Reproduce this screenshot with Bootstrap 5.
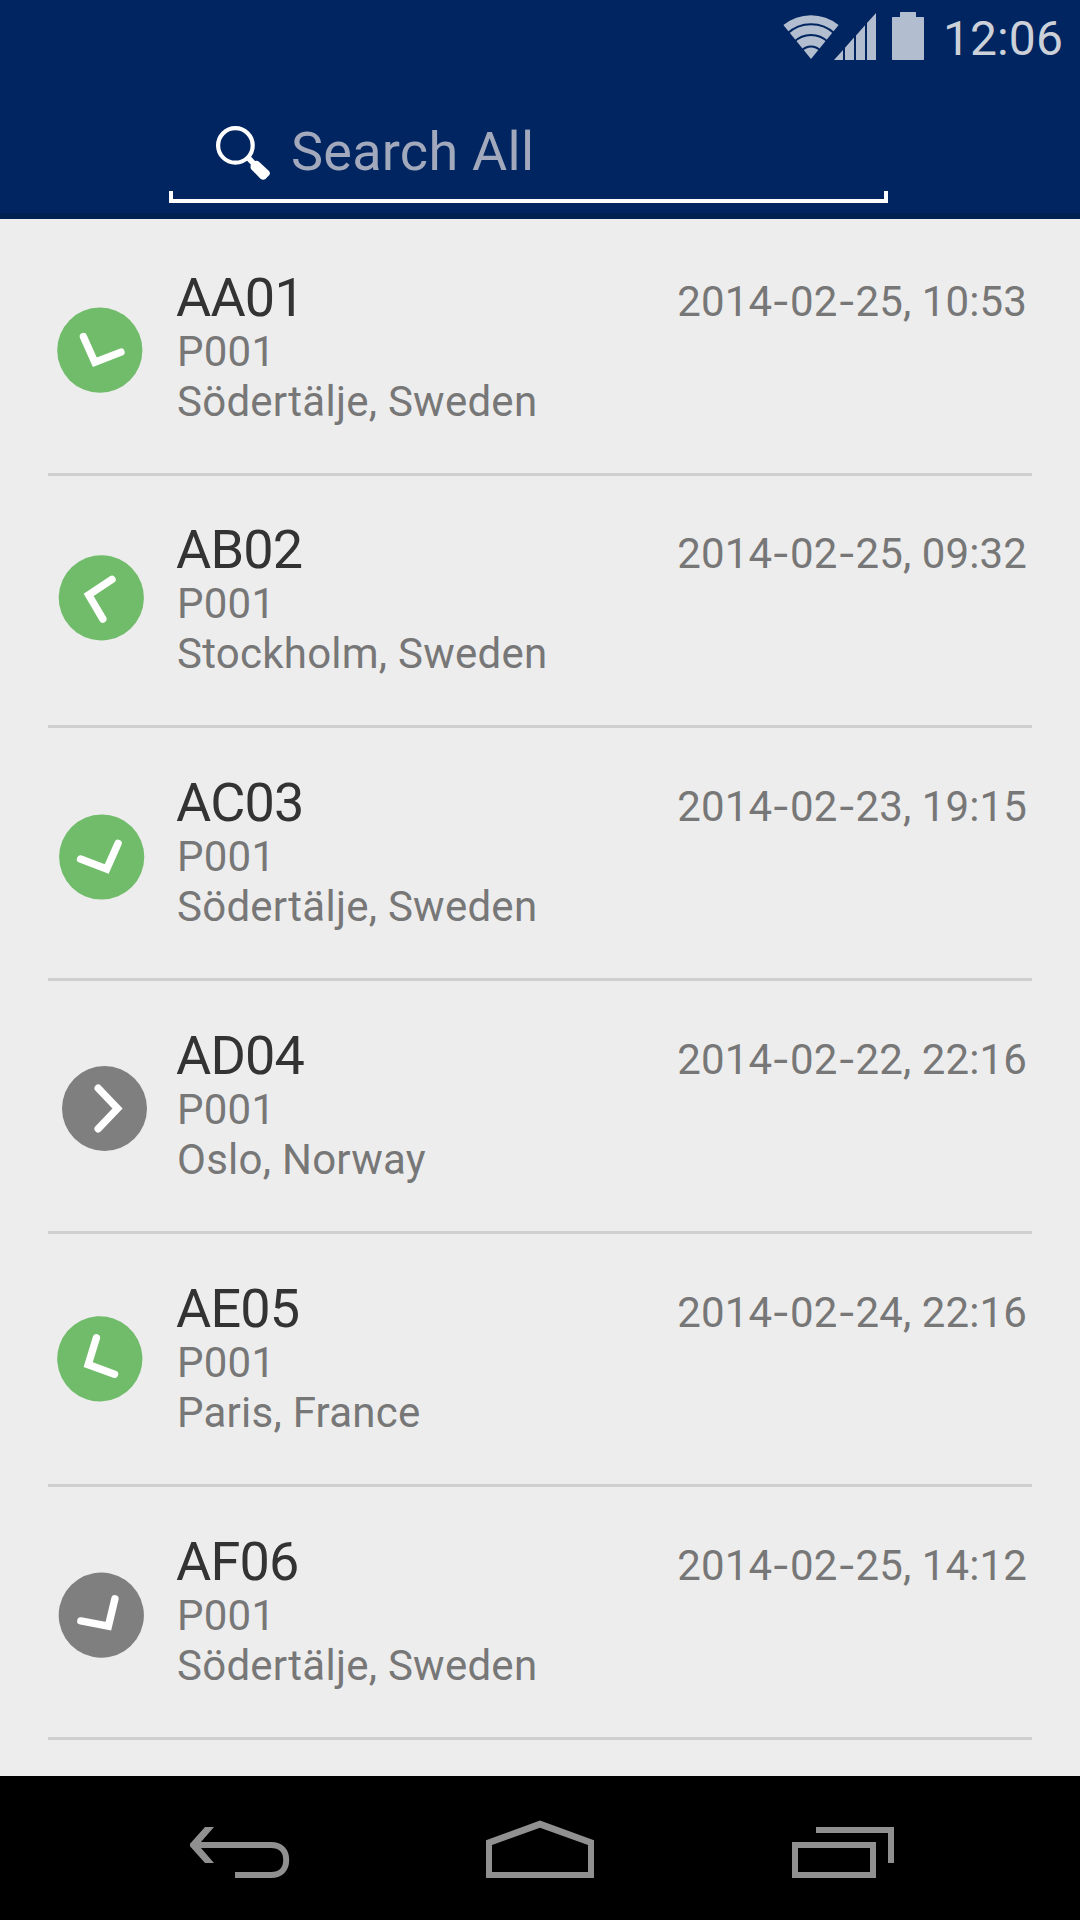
<!DOCTYPE html>
<html lang="en">
<head>
<meta charset="utf-8">
<meta name="viewport" content="width=device-width, initial-scale=1">
<title>Search All</title>
<link href="https://cdn.jsdelivr.net/npm/bootstrap@5.3.0/dist/css/bootstrap.min.css" rel="stylesheet">
<style>
  body { font-family: Roboto, "Noto Sans", sans-serif; background: #ededed; width: 1080px; height: 1920px; overflow: hidden; }
  svg { display: block; flex: none; }
  .app-header { height: 219px; background: #002560; border-bottom: 6px solid #00204f; }
  .status-bar { height: 75px; padding-right: 17px; color: #b2bdd0; }
  .signal-icon { margin-left: -5px; }
  .battery-icon { margin-left: 16px; }
  .clock { font-size: 48px; line-height: 56px; margin: 11px 0 0 19px; letter-spacing: .1px; color: #ccd0d8; }
  .search-box { width: 719px; height: 128px; margin-left: 169px; }
  .search-row { height: 116px; padding-left: 47px; }
  .search-icon { margin-top: 51px; }
  .search-hint { font-size: 54px; line-height: 64px; margin: 45px 0 0 21px; letter-spacing: .25px; color: #a3a9bc; }
  .search-line { height: 12px; border: 4px solid #fff; border-top: 0; }
  .trip-list { height: 1557px; padding: 0 48px; }
  .trip { height: 253px; border-bottom: 3px solid #cfcfcf; padding-top: 1px; }
  .trip:nth-child(1) { height: 257px; padding-top: 5px; }
  .trip:nth-child(2) { height: 252px; padding-top: 0; }
  .first-mark { margin-top: -5px; }
  .trip-text { padding-top: 45px; color: #777; font-size: 42px; line-height: 50px; letter-spacing: .25px; }
  .trip-code { font-size: 54px; line-height: 58px; letter-spacing: -.8px; color: #333; }
  .trip-sub { padding-left: 1px; }
  .trip-date { padding: 53px 5px 0 0; color: #777; font-size: 42px; line-height: 50px; letter-spacing: .12px; white-space: nowrap; }
  .dash { display: inline-block; transform: scaleX(1.25); margin: 0 3.1px; }
  .arrow { fill: none; stroke: #fff; stroke-width: 7.4; stroke-linecap: round; }
  .on { fill: #70bc6a; }
  .off { fill: #7f7f7f; }
  .nav-keys { height: 144px; background: #000; color: #909090; padding: 0 186px 0 190px; gap: 195px; }
</style>
<script src="https://cdn.jsdelivr.net/npm/bootstrap@5.3.0/dist/js/bootstrap.bundle.min.js"></script>
</head>
<body class="d-flex flex-column m-0">

<header class="app-header">
  <div class="status-bar d-flex justify-content-end align-items-start">
    <svg width="56" height="60" viewBox="783 0 56 60" fill="currentColor">
      <path d="M811 59 L783.4 25 A43.8 43.8 0 0 1 838.6 25 Z"/>
      <g fill="none" stroke="#002560" stroke-width="2">
        <path d="M787 33.8 A34.8 34.8 0 0 1 835 33.8"/>
        <path d="M794 42 A24 24 0 0 1 828 42"/>
        <path d="M802 50.3 A12.5 12.5 0 0 1 820 50.3"/>
      </g>
    </svg>
    <svg class="signal-icon" width="42" height="60" viewBox="834 0 42 60" fill="currentColor">
      <path d="M834 60 L843 50 V60Z M845 47.7 L854 37.6 V60 H845Z M856 35.4 L865 25.3 V60 H856Z M867 23 L876 13 V60 H867Z"/>
    </svg>
    <svg class="battery-icon" width="32" height="60" viewBox="892 0 32 60" fill="currentColor">
      <path d="M900 12.5 q0-.5 .5-.5 H915.500 q.5 0 .5 .5 V17 H923.300 q.7 0 .7 .7 V59.300 q0 .7-.7 .7 H892.700 q-.7 0-.7-.7 V17.700 q0-.7 .7-.7 H900Z"/>
    </svg>
    <div class="clock">12:06</div>
  </div>
  <div class="search-box">
    <div class="search-row d-flex align-items-start">
      <svg class="search-icon" width="54" height="54" viewBox="216 126 54 54">
        <circle cx="235.400" cy="145.400" r="17.300" fill="none" stroke="#fff" stroke-width="4.200"/>
        <path d="M247.500 157 L256 166" stroke="#fff" stroke-width="5.500"/>
        <path d="M251 164.500 L253.500 161.500 Q257 160 259 161.800 L269 171 Q270.500 173 269.300 175 L265.500 179 Q263 180.500 260.500 178.800 L251 169 Q250 166.500 251 164.500Z" fill="#fff"/>
      </svg>
      <div class="search-hint">Search All</div>
    </div>
    <div class="search-line"></div>
  </div>
</header>

<main class="trip-list">
  <div class="trip d-flex align-items-start">
    <svg class="first-mark" width="128" height="200" viewBox="0 0 128 200"><g transform="translate(51.800 131.200) rotate(112.400)"><circle class="on" r="42.600"/><path class="arrow" d="M-6.300-20.300 L13 0 L-6.300 20.300"/></g></svg>
    <div class="trip-text flex-grow-1"><div class="trip-code">AA01</div><div class="trip-sub">P001</div><div class="trip-sub">Södertälje, Sweden</div></div>
    <div class="trip-date">2014<span class="dash">-</span>02<span class="dash">-</span>25, 10:53</div>
  </div>
  <div class="trip d-flex align-items-start">
    <svg width="128" height="200" viewBox="0 0 128 200"><g transform="translate(53.300 121.800) rotate(193)"><circle class="on" r="42.600"/><path class="arrow" d="M-6.300-20.300 L13 0 L-6.300 20.300"/></g></svg>
    <div class="trip-text flex-grow-1"><div class="trip-code">AB02</div><div class="trip-sub">P001</div><div class="trip-sub">Stockholm, Sweden</div></div>
    <div class="trip-date">2014<span class="dash">-</span>02<span class="dash">-</span>25, 09:32</div>
  </div>
  <div class="trip d-flex align-items-start">
    <svg width="128" height="200" viewBox="0 0 128 200"><g transform="translate(53.700 128) rotate(67.400)"><circle class="on" r="42.600"/><path class="arrow" d="M-6.300-20.300 L13 0 L-6.300 20.300"/></g></svg>
    <div class="trip-text flex-grow-1"><div class="trip-code">AC03</div><div class="trip-sub">P001</div><div class="trip-sub">Södertälje, Sweden</div></div>
    <div class="trip-date">2014<span class="dash">-</span>02<span class="dash">-</span>23, 19:15</div>
  </div>
  <div class="trip d-flex align-items-start">
    <svg width="128" height="200" viewBox="0 0 128 200"><g transform="translate(56.500 126.500)"><circle class="off" r="42.500"/><path class="arrow" d="M-6.300-20.300 L13 0 L-6.300 20.300"/></g></svg>
    <div class="trip-text flex-grow-1"><div class="trip-code">AD04</div><div class="trip-sub">P001</div><div class="trip-sub">Oslo, Norway</div></div>
    <div class="trip-date">2014<span class="dash">-</span>02<span class="dash">-</span>22, 22:16</div>
  </div>
  <div class="trip d-flex align-items-start">
    <svg width="128" height="200" viewBox="0 0 128 200"><g transform="translate(51.800 123.800) rotate(153.500)"><circle class="on" r="42.600"/><path class="arrow" d="M-6.300-20.300 L13 0 L-6.300 20.300"/></g></svg>
    <div class="trip-text flex-grow-1"><div class="trip-code">AE05</div><div class="trip-sub">P001</div><div class="trip-sub">Paris, France</div></div>
    <div class="trip-date">2014<span class="dash">-</span>02<span class="dash">-</span>24, 22:16</div>
  </div>
  <div class="trip d-flex align-items-start">
    <svg width="128" height="200" viewBox="0 0 128 200"><g transform="translate(53.300 127.200) rotate(57)"><circle class="off" r="42.600"/><path class="arrow" d="M-6.300-20.300 L13 0 L-6.300 20.300"/></g></svg>
    <div class="trip-text flex-grow-1"><div class="trip-code">AF06</div><div class="trip-sub">P001</div><div class="trip-sub">Södertälje, Sweden</div></div>
    <div class="trip-date">2014<span class="dash">-</span>02<span class="dash">-</span>25, 14:12</div>
  </div>
</main>

<nav class="nav-keys d-flex align-items-start">
  <svg width="100" height="144" viewBox="190 1776 100 144">
    <path fill="currentColor" d="M205 1827 H214 L201 1842 V1848 L214 1863 H205 L190 1846.300 V1843.700Z"/>
    <path fill="none" stroke="currentColor" stroke-width="6" d="M198 1845 H271 C281 1845 286.200 1851 286.200 1860 S281 1875 271 1875 H235"/>
  </svg>
  <svg width="109" height="144" viewBox="485 1776 109 144">
    <path fill="currentColor" fill-rule="evenodd" d="M486 1840.300 L540 1820.500 L594 1840.300 V1878 H486Z M492 1845 V1872 H588 V1845 L540 1827.800Z"/>
  </svg>
  <svg width="105" height="144" viewBox="789 1776 105 144" fill="none" stroke="currentColor" stroke-width="6">
    <path d="M795 1845 H873 V1875 H795Z M816 1830 H891 V1863"/>
  </svg>
</nav>

</body>
</html>
